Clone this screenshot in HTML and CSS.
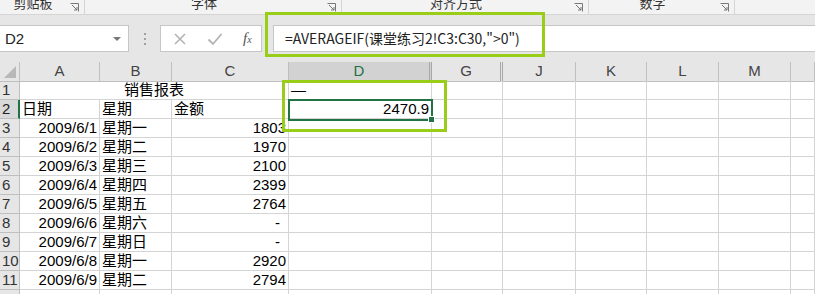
FILE: index.html
```html
<!DOCTYPE html>
<html lang="zh-CN">
<head>
  <meta charset="UTF-8">
  <title>销售报表</title>
  <link rel="stylesheet" href="styles.css">
</head>
<body>

<div class="ribbon">
  <div class="group g1"><span class="glabel">剪贴板</span><span class="launch"><svg width="9" height="9" viewBox="0 0 9 9"><path d="M0.5 0.5h8v8M2 2l5 5M7 4v3H4" fill="none" stroke="#777" stroke-width="1"/></svg></span></div>
  <div class="group g2"><span class="glabel">字体</span><span class="launch"><svg width="9" height="9" viewBox="0 0 9 9"><path d="M0.5 0.5h8v8M2 2l5 5M7 4v3H4" fill="none" stroke="#777" stroke-width="1"/></svg></span></div>
  <div class="group g3"><span class="glabel">对齐方式</span><span class="launch"><svg width="9" height="9" viewBox="0 0 9 9"><path d="M0.5 0.5h8v8M2 2l5 5M7 4v3H4" fill="none" stroke="#777" stroke-width="1"/></svg></span></div>
  <div class="group g4"><span class="glabel">数字</span><span class="launch"><svg width="9" height="9" viewBox="0 0 9 9"><path d="M0.5 0.5h8v8M2 2l5 5M7 4v3H4" fill="none" stroke="#777" stroke-width="1"/></svg></span></div>
  <div class="group g5"></div>
</div>

<div class="fbar">
  <div class="namebox"><span>D2</span><span class="caret"></span></div>
  <div class="grip"><i></i><i></i><i></i></div>
  <div class="fbtns">
    <svg width="14" height="14" viewBox="0 0 14 14"><path d="M2 2l10 10M12 2L2 12" stroke="#b3b3b3" stroke-width="1.6" fill="none"/></svg>
    <svg width="16" height="14" viewBox="0 0 16 14"><path d="M1.5 7.5l4.5 4.5 8.5-10" stroke="#b3b3b3" stroke-width="1.8" fill="none"/></svg>
    <span class="fx">f<sub>x</sub></span>
  </div>
  <div class="finput">=AVERAGEIF(课堂练习2!C3:C30,"&gt;0")</div>
</div>

<div class="sheet" id="sheet">
  <div class="row head">
    <div class="corner"><span class="tri"></span></div>
    <div class="ch">A</div>
    <div class="ch">B</div>
    <div class="ch">C</div>
    <div class="ch sel hid">D</div>
    <div class="ch hid">G</div>
    <div class="ch">J</div>
    <div class="ch">K</div>
    <div class="ch">L</div>
    <div class="ch">M</div>
    <div class="ch"></div>
  </div>
</div>

<div class="mark mark-formula"></div>
<div class="selbox"><span class="handle"></span></div>
<div class="mark mark-cell"></div>

<script>
const sheet = document.getElementById("sheet");

const rows = [
  ["2009/6/1", "星期一", "1803"],
  ["2009/6/2", "星期二", "1970"],
  ["2009/6/3", "星期三", "2100"],
  ["2009/6/4", "星期四", "2399"],
  ["2009/6/5", "星期五", "2764"],
  ["2009/6/6", "星期六", "-"],
  ["2009/6/7", "星期日", "-"],
  ["2009/6/8", "星期一", "2920"],
  ["2009/6/9", "星期二", "2794"]
];

function emptyCells(n) {
  let s = "";
  for (let i = 0; i < n; i++) s += '<div class="cell"></div>';
  return s;
}

let html = "";
html += '<div class="row"><div class="rh">1</div><div class="cell title">销售报表</div><div class="cell">—</div>' + emptyCells(6) + '</div>';
html += '<div class="row"><div class="rh sel">2</div><div class="cell">日期</div><div class="cell">星期</div><div class="cell">金额</div><div class="cell num">2470.9</div>' + emptyCells(6) + '</div>';

rows.forEach((r, i) => {
  const dash = r[2] === "-" ? " dash" : "";
  html += '<div class="row"><div class="rh">' + (i + 3) + '</div>'
    + '<div class="cell num">' + r[0] + '</div>'
    + '<div class="cell">' + r[1] + '</div>'
    + '<div class="cell num' + dash + '">' + r[2] + '</div>'
    + emptyCells(7) + '</div>';
});

// last row only peeks in at the bottom edge
html += '<div class="row"><div class="rh"></div>' + emptyCells(10) + '</div>';
sheet.insertAdjacentHTML("beforeend", html);
</script>

</body>
</html>
```

FILE: styles.css
```css
body {
  margin: 0;
  font-family: "Liberation Sans", "Noto Sans CJK SC", sans-serif;
  background: #fff;
  color: #000;
  overflow: hidden;
  width: 815px;
  height: 294px;
  position: relative;
}

/* ribbon group labels */
.ribbon {
  display: flex;
  height: 14px;
  background: #f3f3f3;
  border-bottom: 1px solid #d5d5d5;
  overflow: hidden;
}

.group {
  display: flex;
  align-items: flex-start;
  border-right: 1px solid #d5d5d5;
  height: 14px;
}

.g1 { width: 84px; }
.g2 { width: 256px; }
.g3 { width: 246px; }
.g4 { width: 145px; }
.g5 { flex: 1; border-right: none; }

.glabel {
  flex: 1;
  text-align: center;
  font-size: 13px;
  line-height: 13px;
  margin-top: -3px;
  color: #333;
}

.launch {
  width: 9px;
  height: 9px;
  margin: 3px 5px 0 4px;
}

.launch svg {
  display: block;
}

/* formula bar */
.fbar {
  display: flex;
  align-items: center;
  height: 47px;
  background: #e6e6e6;
}

.namebox {
  width: 129px;
  height: 27px;
  box-sizing: border-box;
  background: #fff;
  border: 1px solid #c6c6c6;
  border-left: none;
  display: flex;
  align-items: center;
  justify-content: space-between;
  padding: 0 7px 0 5px;
  font-size: 15px;
  color: #222;
}

.caret {
  width: 0;
  height: 0;
  border-left: 4px solid transparent;
  border-right: 4px solid transparent;
  border-top: 4px solid #777;
}

.grip {
  width: 31px;
  display: flex;
  flex-direction: column;
  align-items: center;
  gap: 3px;
}

.grip i {
  width: 2px;
  height: 2px;
  background: #a0a0a0;
}

.fbtns {
  width: 102px;
  height: 27px;
  box-sizing: border-box;
  background: #fff;
  border: 1px solid #c6c6c6;
  display: flex;
  align-items: center;
  justify-content: space-between;
  padding: 0 4px 0 12px;
}

.fx {
  font-family: "Liberation Serif", serif;
  font-style: italic;
  font-size: 15px;
  color: #555;
  width: 14px;
}

.fx sub {
  font-size: 10px;
  vertical-align: 0;
}

.finput {
  flex: 1;
  height: 27px;
  box-sizing: border-box;
  margin-left: 11px;
  margin-right: -1px;
  background: #fff;
  border: 1px solid #c6c6c6;
  padding: 0 0 0 11px;
  font-family: "Noto Sans CJK SC", sans-serif;
  font-size: 14px;
  line-height: 25px;
  color: #222;
  white-space: nowrap;
}

/* sheet grid */
.sheet {
  height: 232px;
  overflow: hidden;
}

.row {
  display: grid;
  grid-template-columns: 20px 80px 72px 117px 143px 71px 73px 71px 72px 72px 1fr;
  height: 19px;
}

.row > div {
  box-sizing: border-box;
  border-right: 1px solid #d4d4d4;
  border-bottom: 1px solid #d4d4d4;
  font-size: 15px;
  line-height: 18px;
  white-space: nowrap;
  overflow: visible;
  padding: 0 2px;
}

.head > div {
  background: #e6e6e6;
  border-color: #bfbfbf;
  text-align: center;
  color: #444;
}

.corner {
  position: relative;
}

.tri {
  position: absolute;
  right: 3px;
  bottom: 3px;
  width: 0;
  height: 0;
  border-left: 12px solid transparent;
  border-bottom: 12px solid #b8b8b8;
}

.head .sel {
  background: #d2d2d2;
  color: #217346;
  border-bottom: 2px solid #217346;
}

.head .hid {
  border-right: 3px double #a8a8a8;
}

.row .rh {
  background: #e6e6e6;
  border-color: #bfbfbf;
  color: #333;
  padding: 0 0 0 2px;
}

.row .rh.sel {
  background: #d9d9d9;
  border-right: 2px solid #217346;
  color: #222;
}

.title {
  grid-column: span 3;
  text-align: center;
  padding-left: 4px;
}

.cell.num {
  text-align: right;
}

.cell.dash {
  padding-right: 8px;
}

/* overlays */
.selbox {
  position: absolute;
  left: 288px;
  top: 99px;
  width: 145px;
  height: 22px;
  box-sizing: border-box;
  border: 2px solid #217346;
}

.handle {
  position: absolute;
  right: -4px;
  bottom: -4px;
  width: 5px;
  height: 5px;
  background: #217346;
  border: 1px solid #fff;
}

.mark {
  position: absolute;
  box-sizing: border-box;
  border: 3px solid #9acd17;
  pointer-events: none;
}

.mark-formula {
  left: 265px;
  top: 12px;
  width: 280px;
  height: 45px;
}

.mark-cell {
  left: 282px;
  top: 80px;
  width: 165px;
  height: 52px;
}
```
